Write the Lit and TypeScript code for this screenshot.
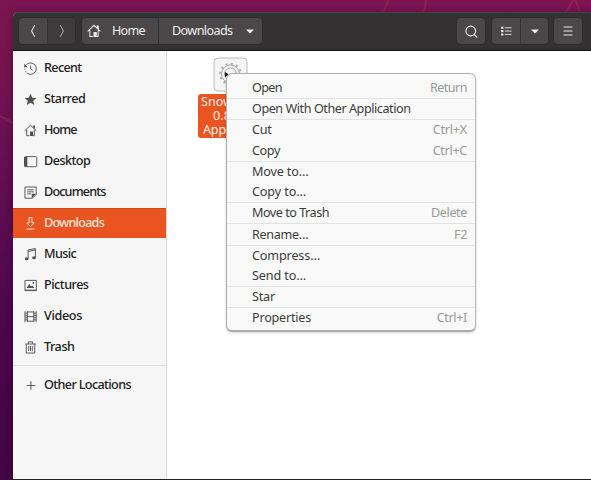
import { LitElement, html, svg, css, nothing } from "lit";
import { customElement } from "lit/decorators.js";

const FONT = '"Noto Sans", "Open Sans", sans-serif';
const SIZE = 12.6;
const ctx = document.createElement("canvas").getContext("2d")!;

/** Label set to a given advance width by adjusting its tracking. */
const label = (text: string, width: number, weight = 400) => {
  ctx.font = `${weight} ${SIZE}px ${FONT}`;
  const gap = (width - ctx.measureText(text).width) / text.length;
  return html`<span class="label" style="letter-spacing:${gap.toFixed(3)}px">${text}</span>`;
};

const icons: Record<string, unknown> = {
  recent: svg`<path d="M2.4 4.2A7 7 0 1 1 4 13.8M8 4.2v4.3l2.5 1.7"/><path class="solid" d="M.2 2v4.4h4.4z"/><path stroke-dasharray="1.3 1.5" d="M1 8.2q.4 3.6 3 5.6"/>`,
  star: svg`<path class="solid" d="m8 .9 2.1 4.9 5.3.4-4.1 3.4 1.3 5.2L8 12l-4.6 2.8 1.3-5.2L.6 6.2l5.3-.4z"/>`,
  home: svg`<path d="M.8 8.4 8 1.5l7.2 6.9M3.3 7v7.4h3.4m6-7.4v7.4h-1.4M11.7 4.5V2.2h1.2v3.5"/><path class="solid" d="M7.4 9.2h3.8v5.6H7.4z"/>`,
  desktop: svg`<rect x=".7" y="2" width="15" height="12.4" rx="1.3"/><path class="solid" d="M.1 2.4h4V14h-4z"/>`,
  documents: svg`<path d="M1.2 1.2H15v9.3L10.5 15H1.2zM4 4.7h8M4 7.2h8M4 9.7h4.5"/><path class="solid" d="M9.5 9.5H15L9.5 15z"/>`,
  downloads: svg`<path d="M6.2.7h3.6v6.5h2.8L8 12 3.4 7.2h2.8zM3 14.8h10"/>`,
  music: svg`<path d="M5 12.7V2.4l9-1.7v10.8M5 4.2l9-1.7"/><ellipse class="solid" cx="3.3" cy="13.2" rx="2.3" ry="1.9"/><ellipse class="solid" cx="12.3" cy="12" rx="2.3" ry="1.9"/>`,
  pictures: svg`<path d="M1.2 1.7h14v12.6h-14zM1.2 13.7h14"/><path class="solid" d="m3.2 11.2 3.3-5 2.2 3 1.5-1.3 2.6 3.3z"/><circle class="solid" cx="11.4" cy="4.8" r="1.1"/>`,
  videos: svg`<path d="M1.2 1.5v13.3M4.2 1.5v13.3M12 1.5v13.3M15 1.5v13.3M4.2 2.4H12M4.2 8.1H12M4.2 13.8H12M1.2 4h3M1.2 6.7h3M1.2 9.4h3M1.2 12.1h3M12 4h3M12 6.7h3M12 9.4h3M12 12.1h3"/>`,
  trash: svg`<path d="M1.5 3.7h13M5.5 3.5V1h5v2.5M2.8 3.7v11.1h10.4V3.7M5.8 6.2v6.2M8 6.2v6.2M10.2 6.2v6.2"/>`,
  plus: svg`<path d="M8.5 2.7v10.6M3.2 8h10.6"/>`,
  back: svg`<path d="M10 1.5 6.4 8l3.6 6.5"/>`,
  forward: svg`<path d="M6 1.5 9.6 8 6 14.5"/>`,
  down: svg`<path class="solid" d="M3.4 6.2h9.2L8 10.9z"/>`,
  search: svg`<circle cx="7.2" cy="7.5" r="5.2"/><path d="m11 11.3 3.1 3.1"/>`,
  list: svg`<path d="M6.3 3.7h9M6.3 8.1h9M6.3 12.5h9"/><path class="solid" d="M1.5 2.3h3V5h-3zM1.5 6.8h3v2.7h-3zM1.5 11.2h3v2.7h-3z"/>`,
  menu: svg`<path d="M3.6 4h8.8M3.6 8h8.8M3.6 12h8.8"/>`,
};
const icon = (name: string, size = 13) =>
  html`<svg class="icon" width=${size} height=${size} viewBox="0 0 16 16">${icons[name]}</svg>`;

const places: [string, string, number][] = [
  ["recent", "Recent", 37.5], ["star", "Starred", 41.3], ["home", "Home", 32.5],
  ["desktop", "Desktop", 46.3], ["documents", "Documents", 61.5], ["downloads", "Downloads", 60],
  ["music", "Music", 32], ["pictures", "Pictures", 44.5], ["videos", "Videos", 38], ["trash", "Trash", 30.5],
];

type Item = [string, number, string?, number?];
const groups: Item[][] = [
  [["Open", 30, "Return", 37]],
  [["Open With Other Application", 158.5]],
  [["Cut", 19.5, "Ctrl+X", 34.3], ["Copy", 28, "Ctrl+C", 34.3]],
  [["Move to…", 56.5], ["Copy to…", 54]],
  [["Move to Trash", 77, "Delete", 36]],
  [["Rename…", 56.5, "F2", 13]],
  [["Compress…", 68], ["Send to…", 54]],
  [["Star", 23]],
  [["Properties", 59, "Ctrl+I", 30.3]],
];

@customElement("app-root")
export class AppRoot extends LitElement {
  static styles = css`
    :host { display: block; position: relative; width: 591px; height: 480px; overflow: hidden;
      font: 12.6px/18px "Noto Sans", "Open Sans", sans-serif; color: #262626; }
    * { box-sizing: border-box; }
    .desktop { position: relative; height: 480px; padding: 12px 0 0 13px; background: linear-gradient(180deg, #7c1551 0, #74134f 16%, #650f51 33%, #4d074b 65%, #420444 100%); }
    .wall { position: absolute; left: 0; top: 0; width: 591px; height: 480px; fill: none; stroke: #a12b5c; stroke-width: 2; opacity: .55; }
    .window { position: relative; height: 468px; display: flex; flex-direction: column; border-radius: 5px 0 0 0; overflow: hidden; background: #fff; border-bottom: 1px solid #242124; }
    .shade { position: absolute; left: 13px; top: 12px; width: 590px; height: 480px; border-radius: 5px; box-shadow: 0 0 6px rgba(20,0,20,.4); }
    .header { flex: none; height: 39px; padding: 0 9px 1px 6px; display: flex; align-items: center; background: #343132; border-top: 1px solid #494143; border-bottom: 1px solid #171616; color: #eee; }
    .group { display: flex; height: 26px; border-radius: 4px; overflow: hidden; background: #494747; box-shadow: 0 0 0 .5px #2c2929; }
    .button { display: flex; align-items: center; justify-content: center; width: 28px; }
    .button + .button { border-left: 1px solid #343232; }
    .search { margin-right: 1px; }
    .dim { background: #3d3b3b; color: #a5a3a3; }
    .path { margin-left: 7px; width: 180px; }
    .crumb { width: 76px; justify-content: flex-start; padding-left: 5px; gap: 11px; }
    .current { width: 104px; justify-content: flex-start; padding-left: 13px; gap: 10px; }
    .spacer { flex: 1; }
    .gap { width: 6px; }
    .label { white-space: pre; flex: none; display: block; }
    .icon { flex: none; fill: none; stroke: currentColor; stroke-width: 1.15; overflow: visible; }
    .solid { fill: currentColor; stroke: none; }
    .body { flex: 1; display: flex; min-height: 0; }
    .sidebar { width: 154px; background: #f6f6f6; border-right: 1px solid #dcdcdc; padding-top: 2px; display: flex; flex-direction: column; gap: 1px; }
    .place { height: 30px; padding-left: 11px; display: flex; align-items: center; gap: 7px; color: #202020; font-weight: 500; }
    .place .icon { color: #505050; }
    .active, .place.active .icon { color: #ffe6da; }
    .active { background: #e95420; box-shadow: inset 0 1px #d24a1b; }
    .rule { height: 1px; background: #dcdcdc; margin: 2px 0 3px; }
    .content { flex: 1; padding: 6px 0 0 31px; }
    .file { width: 64px; display: flex; flex-direction: column; align-items: center; gap: 2px; }
    .caption { width: 64px; height: 44px; padding-top: 1px; border-radius: 3px; background: #e95420; color: #fff1ea; line-height: 14px; overflow: hidden; display: flex; flex-direction: column; }
    .one { padding-left: 3px; } .two { padding-left: 15px; } .three { padding-left: 5px; }
    .menu { position: absolute; left: 226px; top: 73px; width: 250px; height: 259px; padding: 3.7px 0 2px; border: 1px solid #adadad; border-right-color: #b7b7b7; border-bottom: 2px solid #acacac; border-radius: 6px; background: #f9f9f9; box-shadow: 0 1px 3px rgba(0,0,0,.16); color: #3b3b3b; }
    .item { height: 20.5px; padding: .5px 8px 0 25px; display: flex; align-items: center; justify-content: space-between; }
    .key { color: #989898; display: flex; }
    .line { height: 1px; margin-bottom: -.44px; background: #e2e2e2; }
    .cursor { position: absolute; left: 224px; top: 71px; }
  `;

  render() {
    return html`
      <div class="desktop">
        <svg class="wall"><path d="M383 14 389-2M425-2q2 7-2 15M565 13l10-15 5 15M-2 116q8 2 16 8"/></svg>
        <div class="shade"></div>
        <div class="window">
          <div class="header">
            <div class="group"><div class="button">${icon("back", 14)}</div><div class="button dim">${icon("forward", 14)}</div></div>
            <div class="group path">
              <div class="button crumb">${icon("home", 14)}${label("Home", 33)}</div>
              <div class="button current">${label("Downloads", 60.5)}${icon("down", 14)}</div>
            </div>
            <div class="spacer"></div>
            <div class="group search"><div class="button">${icon("search", 15)}</div></div>
            <div class="gap"></div>
            <div class="group"><div class="button">${icon("list", 12)}</div><div class="button">${icon("down", 14)}</div></div>
            <div class="gap"></div>
            <div class="group"><div class="button">${icon("menu", 16)}</div></div>
          </div>
          <div class="body">
            <div class="sidebar">
              ${places.map(([i, t, w]) => html`<div class="place ${t === "Downloads" ? "active" : ""}">${icon(i)}${label(t, w, 500)}</div>`)}
              <div class="rule"></div>
              <div class="place">${icon("plus")}${label("Other Locations", 87, 500)}</div>
            </div>
            <div class="content">
              <div class="file">
                <svg width="35" height="35" viewBox="0 0 35 35" fill="none" stroke="#a8a8a8">
                  <rect x="1" y="1" width="33" height="33" rx="4" fill="#f5f5f5" stroke="#bcbcbc"/>
                  <circle cx="17.5" cy="17" r="9"/><circle cx="17.5" cy="17" r="6"/>
                  <circle cx="17.5" cy="17" r="10.3" stroke-width="2" stroke-dasharray="2 3.4"/>
                </svg>
                <div class="caption">
                  <div class="one">${label("Snow", 32)}</div>
                  <div class="two">${label("0.8", 18)}</div>
                  <div class="three">${label("App", 23)}</div>
                </div>
              </div>
            </div>
          </div>
        </div>
      </div>
      <svg class="cursor" width="6" height="8" viewBox="0 0 6 8"><path d="M1 1v5l1.5-1L4 6.5V3z" fill="#111"/></svg>
      <div class="menu">
        ${groups.map((g, n) => html`${n ? html`<div class="line"></div>` : nothing}${g.map(([t, w, k, kw]) => html`
          <div class="item">${label(t, w)}${k ? html`<span class="key">${label(k, kw!)}</span>` : nothing}</div>`)}`)}
      </div>`;
  }
}
